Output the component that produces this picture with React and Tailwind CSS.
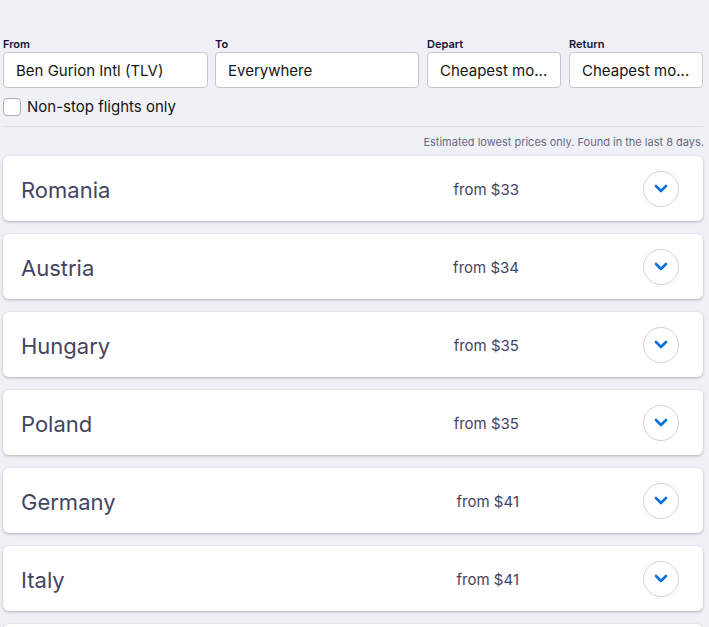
import React from 'react';

const destinations = [
  { country: 'Romania', price: 33 },
  { country: 'Austria', price: 34 },
  { country: 'Hungary', price: 35 },
  { country: 'Poland', price: 35 },
  { country: 'Germany', price: 41 },
  { country: 'Italy', price: 41 },
  { country: 'Greece', price: 44 },
];

const Field = ({ label, value, className }) => (
  <div className={className}>
    <label className="block text-[11px] font-semibold leading-[14px] text-[#111236]">{label}</label>
    <div className="mt-[1px] h-[36px] rounded-[4px] border border-[#c2c9cd] bg-white flex items-center pt-[3px] px-3 text-[15px] text-[#161616] whitespace-nowrap overflow-hidden">
      {value}
    </div>
  </div>
);

const Chevron = () => (
  <svg width="14" height="9" viewBox="0 0 14 9" fill="none">
    <path d="M2 2l5 5 5-5" stroke="#0770e3" strokeWidth="2.6" strokeLinecap="round" strokeLinejoin="round" />
  </svg>
);

const DestinationRow = ({ country, price }) => (
  <div className="h-[65px] shrink-0 bg-white rounded-[6px] shadow-[0_1px_3px_rgba(37,32,31,0.3)] flex items-center pl-[18px] pr-[24px]">
    <span className="flex-1 pt-[4px] text-[22px] text-[#444560]">{country}</span>
    <span className="pt-[4px] text-[15px] text-[#444560] mr-[124px]">from ${price}</span>
    <button className="w-[36px] h-[36px] rounded-full border border-[#cfd3d7] bg-white flex items-center justify-center">
      <Chevron />
    </button>
  </div>
);

export default function App() {
  return (
    <div
      className="h-[627px] bg-[#eff1f7] pt-[37px] px-[3px] overflow-hidden"
      style={{ fontFamily: 'Inter, "Noto Sans", sans-serif' }}
    >
      {/* Search form */}
      <div className="flex w-[700px]">
        <Field label="From" value="Ben Gurion Intl (TLV)" className="w-[205px]" />
        <Field label="To" value="Everywhere" className="w-[204px] ml-[7px]" />
        <Field label="Depart" value="Cheapest mo..." className="w-[134px] ml-[8px]" />
        <Field label="Return" value="Cheapest mo..." className="w-[134px] ml-[8px]" />
      </div>

      <label className="flex items-center gap-[6px] mt-[9px] h-[20px]">
        <span className="w-[18px] h-[18px] rounded-[4px] border border-[#a7acb1] bg-white" />
        <span className="text-[15px] text-[#161616]">Non-stop flights only</span>
      </label>

      <div className="mt-[9px] border-t border-[#dde0e6] w-[700px]" />

      <p className="mt-[8px] text-right text-[11px] leading-[14px] text-[#68697f] w-[701px]">
        Estimated lowest prices only. Found in the last 8 days.
      </p>

      {/* Results */}
      <div className="mt-[7px] flex flex-col gap-[13px] w-[700px]">
        {destinations.map((d) => (
          <DestinationRow key={d.country} country={d.country} price={d.price} />
        ))}
      </div>
    </div>
  );
}
